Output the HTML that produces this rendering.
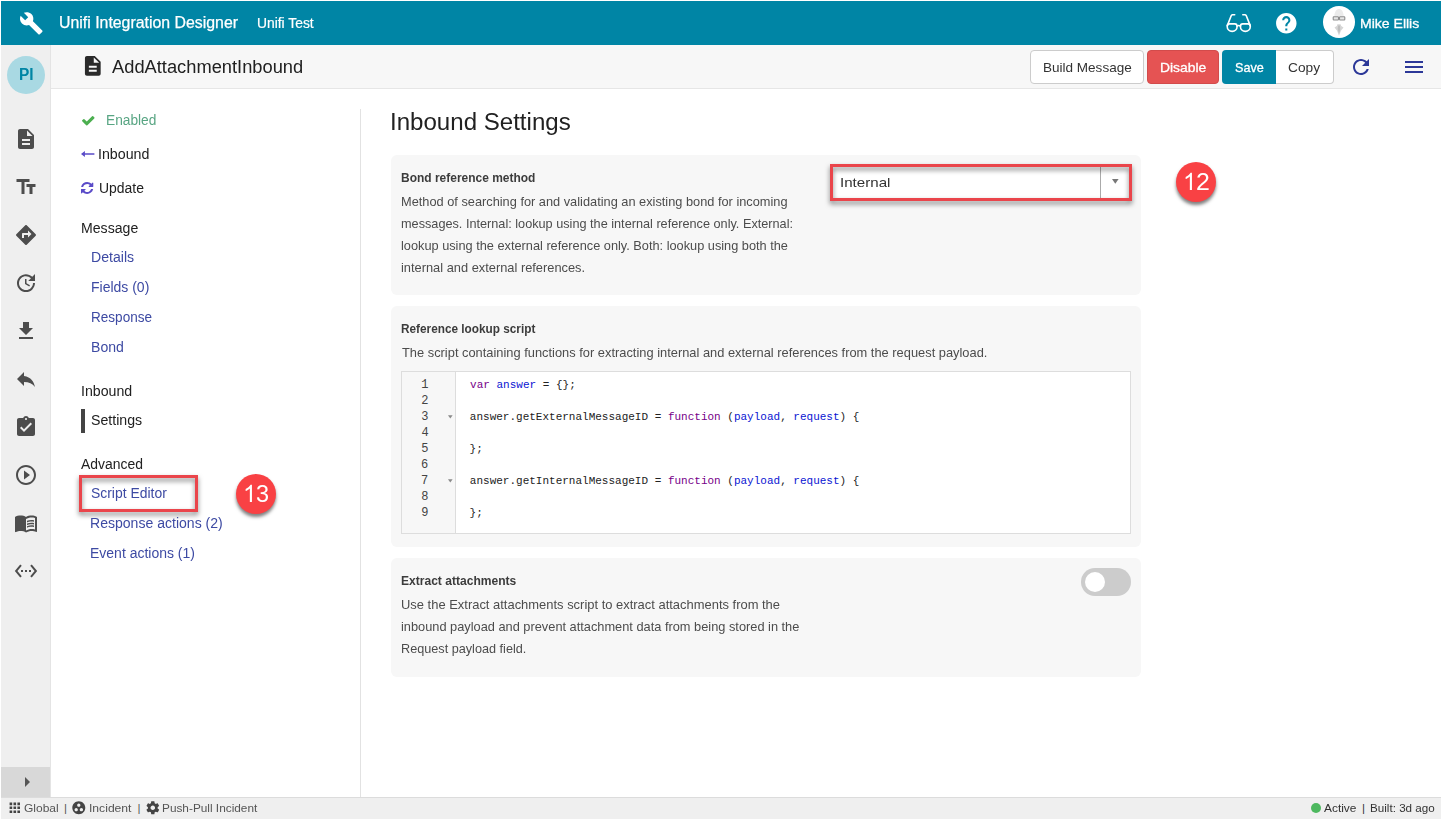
<!DOCTYPE html>
<html lang="en"><head><meta charset="utf-8"><title>Unifi Integration Designer</title>
<style>
html,body{margin:0;padding:0}
body{width:1442px;height:819px;position:relative;overflow:hidden;background:#fff;font-family:"Liberation Sans",sans-serif}
.t{position:absolute;white-space:pre;transform-origin:0 0;line-height:normal;display:inline-block}
.bm{display:inline-block;width:0;height:0}
.m{font-family:"Liberation Mono",monospace}
.a{position:absolute;box-sizing:border-box}
svg{position:absolute;display:block;overflow:visible}
.hdr{left:1px;top:1px;width:1440px;height:44px;background:#0085a5}
.side{left:1px;top:45px;width:50px;height:752px;background:#efefef;border-right:1px solid #e4e4e4}
.collapse{left:1px;top:767px;width:49px;height:30px;background:#d8d8d8}
.tool{left:51px;top:45px;width:1390px;height:44px;background:#f7f7f7;border-bottom:1px solid #e6e6e6}
.navline{left:360px;top:109px;width:1px;height:688px;background:#e2e2e2}
.status{left:1px;top:797px;width:1440px;height:22px;background:#efefef;border-top:1px solid #dcdcdc}
.pi{left:7px;top:56px;width:38px;height:38px;border-radius:50%;background:#a9d9e3}
.btn{border-radius:4px;height:34px;top:50px}
.card{left:391px;width:750px;background:#f7f7f7;border-radius:6px}
.badge{width:40px;height:40px;border-radius:50%;background:#f94144;box-shadow:0 3px 3.500px rgba(0,0,0,.5)}
.redbox{border:3px solid #ea454b;filter:drop-shadow(0 3px 2.500px rgba(0,0,0,.5))}

</style></head>
<body>
<header class="app-header">
<div class="a hdr"></div>
<svg style="left:18.9px;top:10.6px" width="24.6" height="24.6" viewBox="0 0 24 24"><path fill="#fff" d="M22.7 19l-9.1-9.1c.9-2.3.4-5-1.5-6.9-2-2-5-2.4-7.4-1.300L9 6 6 9 1.600 4.700C.4 7.100.9 10.100 2.900 12.100c1.900 1.900 4.600 2.400 6.900 1.500l9.100 9.100c.4.400 1 .400 1.400 0l2.300-2.300c.5-.4.5-1.100.1-1.400z" /></svg>
<svg style="left:1224px;top:11px" width="30" height="24" viewBox="0 0 30 24"><g fill="none" stroke="#fff" stroke-width="1.600" stroke-linecap="round" stroke-linejoin="round"><path d="M10.700 3.700 8.400 3.800Q7.500 3.900 7.200 4.700L3.300 14.600"/><path d="M18.800 3.700 21.100 3.800Q22 3.900 22.300 4.700L26.200 14.600"/><path d="M3.200 15.500C3.200 13.600 4.200 12.900 5.500 12.900H10.800C12.100 12.900 13.100 13.600 13.100 15.500C13.100 18.200 10.900 20.400 8.150 20.400C5.400 20.400 3.200 18.200 3.200 15.500Z"/><path d="M16.400 15.500C16.400 13.600 17.400 12.900 18.700 12.900H24C25.300 12.900 26.300 13.600 26.300 15.500C26.300 18.200 24.100 20.400 21.350 20.400C18.600 20.400 16.400 18.200 16.400 15.500Z"/><path d="M13 15.100Q14.750 13.900 16.500 15.100"/></g></svg>
<svg style="left:1274.3px;top:10.7px" width="24.6" height="24.6" viewBox="0 0 24 24"><path fill="#fff" d="M12 2C6.480 2 2 6.480 2 12s4.480 10 10 10 10-4.480 10-10S17.520 2 12 2zm1 17h-2v-2h2v2zm2.070-7.750l-.9.920C13.450 12.900 13 13.500 13 15h-2v-.5c0-1.100.450-2.100 1.170-2.830l1.240-1.260c.370-.360.590-.860.590-1.410 0-1.100-.9-2-2-2s-2 .9-2 2H8c0-2.210 1.790-4 4-4s4 1.790 4 4c0 .880-.360 1.680-.930 2.250z" /></svg>
<svg style="left:1322.700px;top:6.200px" width="32" height="32" viewBox="0 0 32 32"><circle cx="16" cy="16" r="16" fill="#fff"/><path d="M11.300 10.200c.2-4.600 2.300-7.200 4.700-7.200s4.500 2.600 4.700 7.200z" fill="#ebebeb"/><rect x="10.200" y="10.700" width="5.300" height="3.300" rx=".7" fill="#e6e6e6" stroke="#8d8d8d" stroke-width="1.100"/><rect x="16.500" y="10.700" width="5.300" height="3.300" rx=".7" fill="#e6e6e6" stroke="#8d8d8d" stroke-width="1.100"/><path d="M14.400 18.300h3.200l.6 1.600 2.300 1.500-2.600 3.300L16 29.800l-1.900-5.100-2.600-3.300 2.300-1.500z" fill="#d6d6d6"/><path d="M15.200 19.500h1.600l.5 3.500L16 27.500 14.700 23z" fill="#bdbdbd"/></svg>
<span class="t" style="left:58.71px;top:14.00px;font-size:16px;color:#fff;transform:scaleX(0.9916);-webkit-text-stroke:0.25px #fff;">Unifi Integration Designer</span>
<span class="t" style="left:256.81px;top:15.00px;font-size:14px;color:#fff;transform:scaleX(0.9884);-webkit-text-stroke:0.2px #fff;">Unifi Test</span>
<span class="t" style="left:1360.25px;top:16.00px;font-size:13.4px;color:#fff;transform:scaleX(1.0480);-webkit-text-stroke:0.3px #fff;">Mike Ellis</span>
</header>
<aside class="app-sidebar">
<div class="a side"></div>
<div class="a collapse"></div>
<div class="a pi"></div>
<svg style="left:14px;top:127px" width="24" height="24" viewBox="0 0 24 24"><path fill="#4d4d4d" d="M14 2H6c-1.100 0-1.990.9-1.990 2L4 20c0 1.100.890 2 1.990 2H18c1.100 0 2-.9 2-2V8l-6-6zm2 16H8v-2h8v2zm0-4H8v-2h8v2zm-3-5V3.500L18.500 9H13z" /></svg>
<svg style="left:14px;top:175px" width="24" height="24" viewBox="0 0 24 24"><path fill="#4d4d4d" d="M2.500 4v3h5v12h3V7h5V4h-13zm19 5h-9v3h3v7h3v-7h3V9z" /></svg>
<svg style="left:14px;top:223px" width="24" height="24" viewBox="0 0 24 24"><path fill="#4d4d4d" d="M21.710 11.290l-9-9c-.390-.390-1.020-.390-1.410 0l-9 9c-.390.390-.390 1.020 0 1.410l9 9c.390.390 1.020.390 1.410 0l9-9c.390-.380.390-1.010 0-1.410zM14 14.500V12h-4v3H8v-4c0-.550.450-1 1-1h5V7.500l3.500 3.500-3.500 3.500z" /></svg>
<svg style="left:14px;top:271px" width="24" height="24" viewBox="0 0 24 24"><path fill="#4d4d4d" d="M21 10.120h-6.780l2.740-2.820c-2.730-2.700-7.150-2.800-9.880-.1-2.730 2.710-2.730 7.080 0 9.790 2.730 2.710 7.150 2.710 9.880 0C18.320 15.650 19 14.080 19 12.100h2c0 1.980-.880 4.550-2.640 6.290-3.510 3.480-9.210 3.480-12.720 0-3.500-3.470-3.530-9.110-.020-12.580 3.510-3.470 9.140-3.470 12.650 0L21 3v7.120zM12.500 8v4.250l3.500 2.080-.720 1.210L11 13V8h1.500z" /></svg>
<svg style="left:14px;top:319px" width="24" height="24" viewBox="0 0 24 24"><path fill="#4d4d4d" d="M19 9h-4V3H9v6H5l7 7 7-7zM5 18v2h14v-2H5z" /></svg>
<svg style="left:14px;top:367px" width="24" height="24" viewBox="0 0 24 24"><path fill="#4d4d4d" d="M10 9V5l-7 7 7 7v-4.100c5 0 8.500 1.600 11 5.100-1-5-4-10-11-11z" /></svg>
<svg style="left:14px;top:415px" width="24" height="24" viewBox="0 0 24 24"><path fill="#4d4d4d" d="M19 3h-4.180C14.400 1.840 13.300 1 12 1c-1.300 0-2.400.840-2.820 2H5c-1.100 0-2 .9-2 2v14c0 1.100.9 2 2 2h14c1.100 0 2-.9 2-2V5c0-1.100-.9-2-2-2zm-7 0c.550 0 1 .450 1 1s-.450 1-1 1-1-.450-1-1 .450-1 1-1zm-2 14l-4-4 1.410-1.410L10 14.170l6.590-6.590L18 9l-8 8z" /></svg>
<svg style="left:14px;top:463px" width="24" height="24" viewBox="0 0 24 24"><path fill="#4d4d4d" d="M10 16.500l6-4.500-6-4.500v9zM12 2C6.480 2 2 6.480 2 12s4.480 10 10 10 10-4.480 10-10S17.520 2 12 2zm0 18c-4.410 0-8-3.590-8-8s3.590-8 8-8 8 3.590 8 8-3.590 8-8 8z" /></svg>
<svg style="left:14px;top:511px" width="24" height="24" viewBox="0 0 24 24"><path fill="#4d4d4d" d="M21 5c-1.110-.350-2.330-.5-3.500-.5-1.950 0-4.050.4-5.500 1.500-1.450-1.100-3.550-1.500-5.500-1.500S2.450 4.900 1 6v14.650c0 .250.250.5.5.5.1 0 .150-.050.250-.050C3.100 20.450 5.050 20 6.500 20c1.950 0 4.050.4 5.500 1.500 1.350-.850 3.800-1.500 5.500-1.500 1.650 0 3.350.3 4.750 1.050.1.050.150.050.250.050.250 0 .5-.250.5-.5V6c-.6-.450-1.250-.750-2-1zm0 13.500c-1.100-.350-2.300-.5-3.500-.5-1.700 0-4.150.650-5.500 1.500V8c1.350-.850 3.800-1.500 5.500-1.500 1.200 0 2.400.150 3.500.5v11.500z M17.500 10.500c.880 0 1.730.090 2.500.260V9.240c-.790-.150-1.640-.240-2.500-.240-1.700 0-3.240.290-4.500.830v1.660c1.130-.640 2.700-.990 4.500-.990zM13 12.490v1.660c1.130-.640 2.700-.990 4.500-.990.880 0 1.730.090 2.500.260V11.900c-.790-.150-1.640-.240-2.500-.240-1.700 0-3.240.3-4.500.830zM17.500 14.330c-1.700 0-3.240.290-4.500.830v1.660c1.130-.640 2.700-.990 4.500-.990.880 0 1.730.090 2.500.260v-1.520c-.790-.160-1.640-.240-2.500-.240z" /></svg>
<svg style="left:14px;top:559px" width="24" height="24" viewBox="0 0 24 24"><path fill="#4d4d4d" d="M7.770 6.760L6.230 5.480.820 12l5.410 6.520 1.540-1.280L3.420 12l4.350-5.240zM7 13h2v-2H7v2zm10-2h-2v2h2v-2zm-6 2h2v-2h-2v2zm6.770-7.520l-1.540 1.280L20.580 12l-4.350 5.240 1.540 1.280L23.180 12l-5.410-6.520z" /></svg>
<svg style="left:15px;top:770.3px" width="24" height="24" viewBox="0 0 24 24"><path fill="#555" d="M10 17l5-5-5-5v10z" /></svg>
<span class="t" style="left:18.72px;top:66.00px;font-size:15.8px;color:#0085a5;font-weight:700;transform:scaleX(0.9769);">PI</span>
</aside>
<section class="record-toolbar">
<div class="a tool"></div>
<svg style="left:81.3px;top:54.15px" width="23.6" height="23.6" viewBox="0 0 24 24"><path fill="#2a2a2a" d="M14 2H6c-1.100 0-1.990.9-1.990 2L4 20c0 1.100.890 2 1.990 2H18c1.100 0 2-.9 2-2V8l-6-6zm2 16H8v-2h8v2zm0-4H8v-2h8v2zm-3-5V3.500L18.500 9H13z" /></svg>
<div class="a btn" style="left:1030px;width:113.500px;background:#fff;border:1px solid #ccc"></div>
<div class="a btn" style="left:1147px;width:72px;background:#e55353;border:1px solid #d24b4b"></div>
<div class="a btn" style="left:1222px;width:54px;background:#0085a5;border-radius:4px 0 0 4px"></div>
<div class="a btn" style="left:1276px;width:58px;background:#fff;border:1px solid #ccc;border-left:0;border-radius:0 4px 4px 0"></div>
<svg style="left:1349.2px;top:55px" width="24" height="24" viewBox="0 0 24 24"><path fill="#2c3898" d="M17.650 6.350C16.200 4.900 14.210 4 12 4c-4.420 0-7.990 3.580-7.990 8s3.570 8 7.990 8c3.730 0 6.840-2.550 7.730-6h-2.080c-.820 2.330-3.040 4-5.650 4-3.310 0-6-2.690-6-6s2.690-6 6-6c1.660 0 3.140.690 4.220 1.780L13 11h7V4l-2.350 2.350z" /></svg>
<svg style="left:1401.8px;top:55px" width="24" height="24" viewBox="0 0 24 24"><path fill="#2c3898" d="M3 18h18v-2H3v2zm0-5h18v-2H3v2zm0-7v2h18V6H3z" /></svg>
<span class="t" style="left:111.50px;top:57.00px;font-size:17.5px;color:#212121;transform:scaleX(1.0454);">AddAttachmentInbound</span>
<span class="t" style="left:1042.79px;top:60.00px;font-size:13.4px;color:#333;transform:scaleX(1.0099);">Build Message</span>
<span class="t" style="left:1159.95px;top:60.00px;font-size:13.2px;color:#fff;transform:scaleX(1.0518);-webkit-text-stroke:0.3px #fff;">Disable</span>
<span class="t" style="left:1235.02px;top:60.00px;font-size:13.2px;color:#fff;transform:scaleX(0.9573);-webkit-text-stroke:0.3px #fff;">Save</span>
<span class="t" style="left:1288.33px;top:60.00px;font-size:13.4px;color:#333;transform:scaleX(1.0230);">Copy</span>
</section>
<nav class="record-nav">
<div class="a navline"></div>
<svg style="left:81.700px;top:115.500px" width="12.500" height="9.600" viewBox="121 334 1550 1188" preserveAspectRatio="none"><path fill="#4caf50" d="M1671 566q0 40-28 68l-724 724-136 136q-28 28-68 28t-68-28l-136-136-362-362q-28-28-28-68t28-68l136-136q28-28 68-28t68 28l294 295 656-657q28-28 68-28t68 28l136 136q28 28 28 68z"/></svg>
<svg style="left:81.100px;top:149.100px" width="14" height="10" viewBox="0 0 14 10"><path d="M0 5 3.900 1.900V4.200H13.400V5.800H3.900V8.100z" fill="#5a4bc8"/></svg>
<svg style="left:80.900px;top:182.100px" width="12.300" height="11.900" viewBox="0 0 1536 1536" preserveAspectRatio="none"><path fill="#5a4bc8" d="M1511 928q0 5-1 7-64 268-268 434.500T764 1536q-146 0-282.500-55T238 1324l-129 129q-19 19-45 19t-45-19-19-45V960q0-26 19-45t45-19h448q26 0 45 19t19 45-19 45l-137 137q71 66 161 102t187 36q134 0 250-65t186-179q11-17 53-117 8-23 30-23h192q13 0 22.500 9.500t9.500 22.500zm25-800v448q0 26-19 45t-45 19h-448q-26 0-45-19t-19-45 19-45l138-138Q969 256 768 256q-134 0-250 65T332 500q-11 17-53 117-8 23-30 23H50q-13 0-22.500-9.500T18 608v-7q65-268 270-434.500T768 0q146 0 284 55.500T1297 212l130-129q19-19 45-19t45 19 19 45z"/></svg>
<div class="a" style="left:81px;top:409px;width:4px;height:24px;background:#444"></div>
<div class="a redbox" style="left:79px;top:475px;width:119px;height:37px"></div>
<div class="a badge" style="left:236px;top:474px"></div>
<svg style="left:243.0px;top:478px" width="24" height="24" viewBox="0 0 2048 2048"><path fill="#fff" transform="translate(0,2048) scale(1,-1)" d="M763 0H583V1147Q518 1085 412.500 1023T223 930V1104Q373 1174.500 485.500 1275T645 1470H763V0Z"/></svg>
<span class="t" style="left:106.47px;top:112.00px;font-size:14px;color:#58a583;transform:scaleX(0.9807);">Enabled</span>
<span class="t" style="left:98.23px;top:146.00px;font-size:14px;color:#212121;transform:scaleX(1.0165);">Inbound</span>
<span class="t" style="left:98.60px;top:180.00px;font-size:14px;color:#212121;transform:scaleX(0.9954);">Update</span>
<span class="t" style="left:80.64px;top:220.00px;font-size:14px;color:#212121;transform:scaleX(1.0073);">Message</span>
<span class="t" style="left:90.64px;top:249.00px;font-size:14px;color:#3d4aa3;transform:scaleX(1.0073);">Details</span>
<span class="t" style="left:90.65px;top:279.00px;font-size:14px;color:#3d4aa3;transform:scaleX(0.9991);">Fields (0)</span>
<span class="t" style="left:91.09px;top:309.00px;font-size:14px;color:#3d4aa3;transform:scaleX(0.9682);">Response</span>
<span class="t" style="left:90.69px;top:339.00px;font-size:14px;color:#3d4aa3;transform:scaleX(1.0049);">Bond</span>
<span class="t" style="left:80.73px;top:383.00px;font-size:14px;color:#212121;transform:scaleX(1.0124);">Inbound</span>
<span class="t" style="left:90.84px;top:412.00px;font-size:14px;color:#212121;transform:scaleX(1.0112);">Settings</span>
<span class="t" style="left:81.00px;top:456.00px;font-size:14px;color:#212121;transform:scaleX(0.9951);">Advanced</span>
<span class="t" style="left:90.85px;top:485.00px;font-size:14px;color:#3d4aa3;transform:scaleX(0.9940);">Script Editor</span>
<span class="t" style="left:90.35px;top:515.00px;font-size:14px;color:#3d4aa3;transform:scaleX(1.0035);">Response actions (2)</span>
<span class="t" style="left:90.35px;top:545.00px;font-size:14px;color:#3d4aa3;transform:scaleX(0.9990);">Event actions (1)</span>
<span class="t" style="left:256.32px;top:480.00px;font-size:24px;color:#fff;transform:scaleX(0.9778);">3</span>
</nav>
<main class="record-content">
<div class="a card" style="top:155px;height:140px"></div>
<div class="a card" style="top:306px;height:241px"></div>
<div class="a card" style="top:558px;height:119px"></div>
<div class="a" style="left:831px;top:165px;width:300px;height:35px;background:#fff"></div>
<div class="a" style="left:1100px;top:166px;width:1px;height:33px;background:#aaa"></div>
<svg style="left:1112.400px;top:179.400px" width="6.600" height="4.800" viewBox="0 0 8 5" preserveAspectRatio="none"><path d="M0 0h8L4 5z" fill="#777"/></svg>
<div class="a redbox" style="left:830px;top:164px;width:302px;height:37px"></div>
<div class="a badge" style="left:1176px;top:162px"></div>
<div class="a" style="left:401px;top:371px;width:730px;height:162.500px;background:#fff;border:1px solid #ddd"></div>
<div class="a" style="left:402px;top:372px;width:54px;height:160.500px;background:#f7f7f7;border-right:1px solid #ddd"></div>
<svg style="left:447.800px;top:414.7px" width="4.600" height="3.800" viewBox="0 0 8 6"><path d="M0 0h8L4 6z" fill="#8a8a8a"/></svg>
<svg style="left:447.800px;top:478.7px" width="4.600" height="3.800" viewBox="0 0 8 6"><path d="M0 0h8L4 6z" fill="#8a8a8a"/></svg>
<div class="a" style="left:1081px;top:568px;width:50px;height:28px;border-radius:14px;background:#ccc"></div>
<div class="a" style="left:1085px;top:572px;width:20px;height:20px;border-radius:50%;background:#fff"></div>
<svg style="left:1183.0px;top:166.2px" width="24" height="24" viewBox="0 0 2048 2048"><path fill="#fff" transform="translate(0,2048) scale(1,-1)" d="M763 0H583V1147Q518 1085 412.500 1023T223 930V1104Q373 1174.500 485.500 1275T645 1470H763V0Z"/></svg>
<span class="t" style="left:1195.60px;top:168.00px;font-size:24px;color:#fff;transform:scaleX(1.0364);">2</span>
<span class="t" style="left:390.39px;top:109.00px;font-size:23.5px;color:#212121;transform:scaleX(1.0245);">Inbound Settings</span>
<span class="t" style="left:401.11px;top:170.00px;font-size:13px;color:#3c3c3c;font-weight:700;transform:scaleX(0.9213);">Bond reference method</span>
<span class="t" style="left:400.85px;top:194.00px;font-size:13.5px;color:#4c4c4c;transform:scaleX(0.9469);">Method of searching for and validating an existing bond for incoming</span>
<span class="t" style="left:400.86px;top:216.00px;font-size:13.5px;color:#4c4c4c;transform:scaleX(0.9401);">messages. Internal: lookup using the internal reference only. External:</span>
<span class="t" style="left:400.86px;top:238.00px;font-size:13.5px;color:#4c4c4c;transform:scaleX(0.9449);">lookup using the external reference only. Both: lookup using both the</span>
<span class="t" style="left:400.85px;top:260.00px;font-size:13.5px;color:#4c4c4c;transform:scaleX(0.9509);">internal and external references.</span>
<span class="t" style="left:839.61px;top:175.00px;font-size:13.6px;color:#333;transform:scaleX(1.1121);">Internal</span>
<span class="t" style="left:401.22px;top:321.00px;font-size:13px;color:#3c3c3c;font-weight:700;transform:scaleX(0.9073);">Reference lookup script</span>
<span class="t" style="left:401.56px;top:345.00px;font-size:13.5px;color:#4c4c4c;transform:scaleX(0.9525);">The script containing functions for extracting internal and external references from the request payload.</span>
<span class="t" style="left:401.10px;top:573.00px;font-size:13px;color:#3c3c3c;font-weight:700;transform:scaleX(0.9276);">Extract attachments</span>
<span class="t" style="left:400.84px;top:597.00px;font-size:13.5px;color:#4c4c4c;transform:scaleX(0.9585);">Use the Extract attachments script to extract attachments from the</span>
<span class="t" style="left:400.85px;top:619.00px;font-size:13.5px;color:#4c4c4c;transform:scaleX(0.9478);">inbound payload and prevent attachment data from being stored in the</span>
<span class="t" style="left:400.86px;top:641.00px;font-size:13.5px;color:#4c4c4c;transform:scaleX(0.9379);">Request payload field.</span>
<span class="t m" style="left:470.10px;top:379.00px;font-size:11px;color:#222;"><span style="color:#770088">var</span> <span style="color:#0a14d2">answer</span> = {};</span>
<span class="t m" style="left:469.85px;top:411.00px;font-size:11px;color:#222;">answer.getExternalMessageID = <span style="color:#770088">function</span> (<span style="color:#0a14d2">payload</span>, <span style="color:#0a14d2">request</span>) {</span>
<span class="t m" style="left:469.60px;top:443.00px;font-size:11px;color:#222;">};</span>
<span class="t m" style="left:469.85px;top:475.00px;font-size:11px;color:#222;">answer.getInternalMessageID = <span style="color:#770088">function</span> (<span style="color:#0a14d2">payload</span>, <span style="color:#0a14d2">request</span>) {</span>
<span class="t m" style="left:469.60px;top:507.00px;font-size:11px;color:#222;">};</span>
<span class="t m" style="left:421.25px;top:378.00px;font-size:12px;color:#444;">1</span>
<span class="t m" style="left:421.25px;top:394.00px;font-size:12px;color:#444;">2</span>
<span class="t m" style="left:421.25px;top:410.00px;font-size:12px;color:#444;">3</span>
<span class="t m" style="left:421.50px;top:426.00px;font-size:12px;color:#444;">4</span>
<span class="t m" style="left:421.25px;top:442.00px;font-size:12px;color:#444;">5</span>
<span class="t m" style="left:421.00px;top:458.00px;font-size:12px;color:#444;">6</span>
<span class="t m" style="left:421.00px;top:474.00px;font-size:12px;color:#444;">7</span>
<span class="t m" style="left:421.25px;top:490.00px;font-size:12px;color:#444;">8</span>
<span class="t m" style="left:421.25px;top:506.00px;font-size:12px;color:#444;">9</span>
</main>
<footer class="status-bar">
<div class="a status"></div>
<svg style="left:6.8px;top:799.7px" width="15.6" height="15.6" viewBox="0 0 24 24"><path fill="#444" d="M4 8h4V4H4v4zm6 12h4v-4h-4v4zm-6 0h4v-4H4v4zm0-6h4v-4H4v4zm6 0h4v-4h-4v4zm6-10v4h4V4h-4zm-6 4h4V4h-4v4zm6 6h4v-4h-4v4zm0 6h4v-4h-4v4z" /></svg>
<svg style="left:71.4px;top:799.6px" width="15.6" height="15.6" viewBox="0 0 24 24"><path fill="#444" d="M12 2C6.480 2 2 6.480 2 12s4.480 10 10 10 10-4.480 10-10S17.520 2 12 2zM8 17.500c-1.380 0-2.500-1.120-2.500-2.500s1.120-2.500 2.500-2.500 2.500 1.120 2.500 2.500-1.120 2.500-2.500 2.500zM9.500 8c0-1.380 1.120-2.500 2.500-2.500s2.500 1.120 2.500 2.500-1.120 2.500-2.500 2.500S9.500 9.380 9.500 8zm6.500 9.500c-1.380 0-2.500-1.120-2.500-2.500s1.120-2.500 2.500-2.500 2.500 1.120 2.500 2.500-1.120 2.500-2.500 2.500z" /></svg>
<svg style="left:144.6px;top:799.6px" width="15.6" height="15.6" viewBox="0 0 24 24"><path fill="#444" d="M19.430 12.980c.040-.320.070-.640.070-.980s-.030-.660-.070-.980l2.110-1.650c.190-.150.240-.420.120-.640l-2-3.460c-.120-.220-.390-.3-.610-.220l-2.490 1c-.520-.4-1.080-.730-1.690-.980l-.380-2.650C14.460 2.180 14.250 2 14 2h-4c-.250 0-.460.180-.490.420l-.380 2.650c-.610.250-1.170.590-1.690.980l-2.490-1c-.230-.090-.490 0-.610.220l-2 3.460c-.130.220-.070.490.120.640l2.110 1.650c-.040.320-.070.650-.070.980s.030.660.070.980l-2.110 1.650c-.190.150-.240.420-.120.640l2 3.460c.120.220.390.3.610.220l2.490-1c.520.4 1.080.730 1.690.980l.380 2.650c.030.240.240.420.490.420h4c.250 0 .460-.180.490-.420l.380-2.650c.610-.250 1.170-.590 1.690-.980l2.490 1c.230.090.490 0 .610-.220l2-3.460c.120-.220.070-.490-.120-.640l-2.110-1.650zM12 15.500c-1.930 0-3.500-1.570-3.500-3.500s1.570-3.500 3.500-3.500 3.500 1.570 3.500 3.500-1.570 3.500-3.500 3.500z" /></svg>
<div class="a" style="left:1311px;top:802.800px;width:10.400px;height:10.400px;border-radius:50%;background:#4db85f"></div>
<span class="t" style="left:24.18px;top:802.00px;font-size:11.5px;color:#555;transform:scaleX(1.0438);">Global</span>
<span class="t" style="left:64.00px;top:802.00px;font-size:11.5px;color:#555;">|</span>
<span class="t" style="left:88.85px;top:802.00px;font-size:11.5px;color:#555;transform:scaleX(1.0548);">Incident</span>
<span class="t" style="left:137.40px;top:802.00px;font-size:11.5px;color:#555;">|</span>
<span class="t" style="left:162.37px;top:802.00px;font-size:11.5px;color:#555;transform:scaleX(1.0278);">Push-Pull Incident</span>
<span class="t" style="left:1324.00px;top:802.00px;font-size:11.5px;color:#333;transform:scaleX(1.0341);">Active</span>
<span class="t" style="left:1362.10px;top:802.00px;font-size:11.5px;color:#333;">|</span>
<span class="t" style="left:1370.09px;top:802.00px;font-size:11.5px;color:#333;transform:scaleX(1.0128);">Built: 3d ago</span>
</footer>
</body></html>
